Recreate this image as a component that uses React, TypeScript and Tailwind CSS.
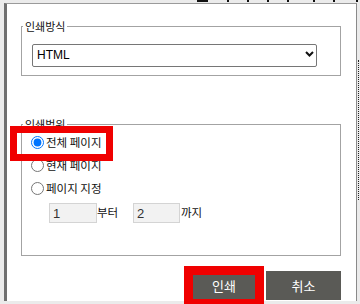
import React from 'react';

const ko = "font-['Noto_Sans_CJK_KR','Liberation_Sans',sans-serif]";

export default function App() {
    return (
        <div className="relative w-[360px] h-[304px] overflow-hidden bg-[#ebebeb] pt-[3px] pl-[4px] font-['Liberation_Sans','Noto_Sans_CJK_KR',sans-serif]">
            {/* bits of the page underneath */}
            <div className="absolute top-0 left-[197px] w-[11px] h-[2px] bg-[#111]" />
            {[227, 247, 267, 287, 313, 333, 356].map((x) => (
                <div key={x} className="absolute top-0 w-[2px] h-[2px] bg-[#111]" style={{ left: x }} />
            ))}
            <div className="absolute top-[60px] left-[358px] w-[1px] h-[140px] border-l border-dotted border-[#222]" />

            <div className="w-[353px] h-[298px] bg-white border-t border-t-[#9a9a9a] border-l-[3px] border-l-[#6f6f6f] border-r border-r-[#8a8a8a] pl-[14px] pt-[16px]">
                <fieldset className="w-[320px] border border-[#a3a3a3]">
                    <legend className={`ml-[1px] px-[2px] text-[11px] leading-[12px] text-[#111] ${ko}`}>인쇄방식</legend>
                    <div className="relative mt-[10px] mb-[10px] ml-[10px] w-[285px] h-[23px]">
                        <select className="appearance-none w-full h-full border border-[#767676] rounded-[2px] bg-white pl-[4px] text-[12px] text-black outline-none">
                            <option>HTML</option>
                            <option>PDF</option>
                        </select>
                        <svg className="absolute right-[3px] top-[9px] pointer-events-none" width="9" height="6" viewBox="0 0 9 6">
                            <path d="M1 1 L4.5 4.5 L8 1" fill="none" stroke="#111" strokeWidth="2" />
                        </svg>
                    </div>
                </fieldset>

                <fieldset className="w-[320px] mt-[42px] border border-[#a3a3a3] pb-[32px]">
                    <legend className={`ml-[1px] px-[2px] text-[11px] leading-[12px] text-[#111] ${ko}`}>인쇄범위</legend>
                    <div className={`flex flex-col text-[11.5px] text-[#111] ${ko}`}>
                        <label className="flex items-center h-[23px] mt-[1px] pl-[9px]">
                            <input type="radio" name="range" defaultChecked className="w-[13px] h-[13px] accent-[#0075ff]" />
                            <span className="ml-[2px]">전체 페이지</span>
                        </label>
                        <label className="flex items-center h-[23px] pl-[9px]">
                            <input type="radio" name="range" className="w-[13px] h-[13px]" />
                            <span className="ml-[2px]">현재 페이지</span>
                        </label>
                        <label className="flex items-center h-[23px] pl-[9px]">
                            <input type="radio" name="range" className="w-[13px] h-[13px]" />
                            <span className="ml-[2px]">페이지 지정</span>
                        </label>
                        <div className="flex items-center mt-[3px] ml-[27px] h-[20px]">
                            <input defaultValue="1" className="w-[48px] h-[20px] bg-[#f2f2f2] border border-[#d4d4d4] pl-[3px] text-[13px] text-[#333] font-['Liberation_Sans',sans-serif]" />
                            <span className="w-[36px]">부터</span>
                            <input defaultValue="2" className="w-[47px] h-[20px] bg-[#f2f2f2] border border-[#d4d4d4] pl-[3px] text-[13px] text-[#333] font-['Liberation_Sans',sans-serif]" />
                            <span className="ml-[1px]">까지</span>
                        </div>
                    </div>
                </fieldset>

                <div className={`flex justify-end gap-[4px] w-[320px] mt-[15px] ${ko}`}>
                    <button className="w-[76px] h-[29px] bg-[#5a5a56] text-white text-[13px]">인쇄</button>
                    <button className="w-[75px] h-[29px] bg-[#5a5a56] text-white text-[13px]">취소</button>
                </div>
            </div>

            {/* red highlight annotations */}
            <div className="absolute left-[10px] top-[126px] w-[103px] h-[35px] border-[7px] border-[#f00000]" />
            <div className="absolute left-[184px] top-[266px] w-[80px] h-[42px] border-[9px] border-[#f00000]" />
        </div>
    );
}
